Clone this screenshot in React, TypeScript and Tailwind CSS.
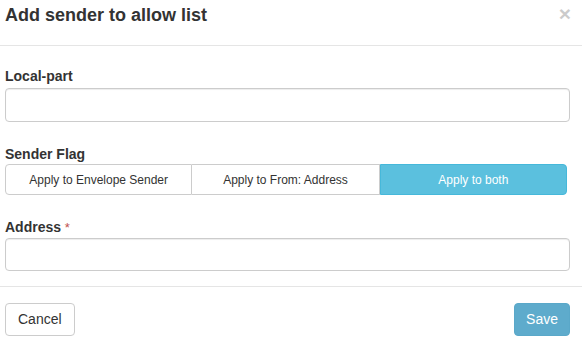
import React from "react";

export default function App() {
  return (
    <div className="w-[582px] h-[343px] bg-white text-[#333] font-['Liberation_Sans',Arial,sans-serif] overflow-hidden">
      <div className="h-[46px] border-b border-[#e5e5e5] flex justify-between items-start pl-[5px] pr-[11px] pt-[6px]">
        <h4 className="text-[18px] font-bold leading-[1.1] m-0">Add sender to allow list</h4>
        <button className="text-[21px] font-bold leading-none text-black opacity-20 -mt-[3px]">×</button>
      </div>
      <div className="pl-[5px] pr-[12px] pt-[20px]">
        <label className="block text-[14px] font-bold leading-5 mb-[2px]">Local-part</label>
        <input className="block w-full h-[34px] border border-[#ccc] rounded-[4px] shadow-[inset_0_1px_1px_rgba(0,0,0,0.075)] outline-none px-3" />
        <label className="block text-[14px] font-bold leading-5 mt-[22px]">Sender Flag</label>
        <div className="grid grid-cols-3 w-[562px] h-[31px] text-[12px]">
          <button className="border border-[#ccc] rounded-l-[4px] bg-white text-[#333]">Apply to Envelope Sender</button>
          <button className="border border-l-0 border-[#ccc] bg-white text-[#333]">Apply to From: Address</button>
          <button className="border border-[#46b8da] rounded-r-[4px] bg-[#5bc0de] text-white">Apply to both</button>
        </div>
        <label className="block text-[14px] font-bold leading-5 mt-[22px]">
          Address<span className="text-[#c0504d] font-normal text-[13px]"> *</span>
        </label>
        <input className="block w-full h-[33px] border border-[#ccc] rounded-[4px] shadow-[inset_0_1px_1px_rgba(0,0,0,0.075)] outline-none px-3" />
      </div>
      <div className="mt-[15px] border-t border-[#e5e5e5] flex justify-between pl-[5px] pr-[12px] pt-[16px]">
        <button className="h-[33px] px-[12px] border border-[#ccc] rounded-[4px] bg-white text-[14px] text-[#333]">Cancel</button>
        <button className="h-[33px] px-[11px] border border-[#5aa8c9] rounded-[4px] bg-[#5eabcc] text-[14px] text-white">Save</button>
      </div>
    </div>
  );
}
